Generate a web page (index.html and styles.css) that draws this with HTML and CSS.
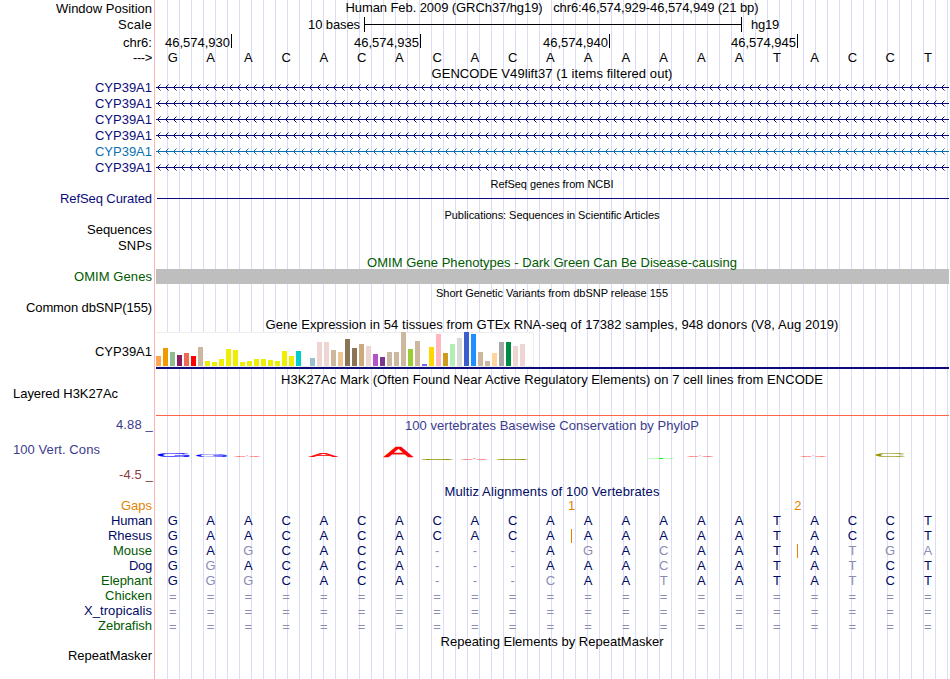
FILE: index.html
```
<!DOCTYPE html>
<html lang="en">
<head>
<meta charset="utf-8">
<title>Genome Browser</title>
<link rel="stylesheet" href="styles.css">
</head>
<body>
<main class="browser">
  <div class="row h17"><div class="label" data-w="96">Window Position</div><div class="title up" data-w="413">Human Feb. 2009 (GRCh37/hg19) &nbsp; chr6:46,574,929-46,574,949 (21 bp)</div></div>
  <div class="row h17"><div class="label up" data-w="34">Scale</div><div class="scale"><span class="up" data-w="52">10 bases</span><i class="ruler"></i><span class="up" data-w="28">hg19</span></div></div>
  <div class="row h16"><div class="label low" data-w="29">chr6:</div><div class="ticks"><span data-w="65">46,574,930</span><span data-w="65">46,574,935</span><span data-w="65">46,574,940</span><span data-w="65">46,574,945</span></div></div>
  <div class="row h15"><div class="label" data-w="19">---&gt;</div><div class="bases black" data-seq="GAACACACACAAAAAATACCT"></div></div>
  <div class="row h15"><div></div><div class="title lower" data-w="241">GENCODE V49lift37 (1 items filtered out)</div></div>
  <div class="row h16 navy"><div class="label" data-w="57">CYP39A1</div><div class="gene"></div></div>
  <div class="row h16 navy"><div class="label" data-w="57">CYP39A1</div><div class="gene"></div></div>
  <div class="row h16 navy"><div class="label" data-w="57">CYP39A1</div><div class="gene"></div></div>
  <div class="row h16 navy"><div class="label" data-w="57">CYP39A1</div><div class="gene"></div></div>
  <div class="row h16 azure"><div class="label" data-w="57">CYP39A1</div><div class="gene"></div></div>
  <div class="row h16 navy"><div class="label" data-w="57">CYP39A1</div><div class="gene"></div></div>
  <div class="row h15"><div></div><div class="title small" data-w="123">RefSeq genes from NCBI</div></div>
  <div class="row h16 navy"><div class="label" data-w="92">RefSeq Curated</div><div class="refseq"></div></div>
  <div class="row h15"><div></div><div class="title small" data-w="215">Publications: Sequences in Scientific Articles</div></div>
  <div class="row h16"><div class="label" data-w="65">Sequences</div></div>
  <div class="row h16"><div class="label" data-w="34">SNPs</div></div>
  <div class="row h15 green"><div></div><div class="title lower" data-w="370">OMIM Gene Phenotypes - Dark Green Can Be Disease-causing</div></div>
  <div class="row h16"><div class="label green" data-w="78">OMIM Genes</div><div class="omim"></div></div>
  <div class="row h15"><div></div><div class="title small" data-w="232">Short Genetic Variants from dbSNP release 155</div></div>
  <div class="row h16"><div class="label" data-w="126">Common dbSNP(155)</div></div>
  <div class="row h16"><div></div><div class="title low" data-w="573">Gene Expression in 54 tissues from GTEx RNA-seq of 17382 samples, 948 donors (V8, Aug 2019)</div></div>
  <div class="row h39"><div class="label" data-w="57">CYP39A1</div><div class="gtex"><div class="bars"></div></div></div>
  <div class="row h17"><div></div><div class="title" data-w="542">H3K27Ac Mark (Often Found Near Active Regulatory Elements) on 7 cell lines from ENCODE</div></div>
  <div class="row h28"><div class="label left top" data-w="105">Layered H3K27Ac</div><div class="h3k"></div></div>
  <div class="row h18 slate"><div class="label axis" data-w="37">4.88 _</div><div class="title low" data-w="294">100 vertebrates Basewise Conservation by PhyloP</div></div>
  <div class="row h50">
    <div class="cons"><div class="label left slate" data-w="87">100 Vert. Cons</div><div class="label axis maroon" data-w="34">-4.5 _</div></div>
    <svg class="logo" viewBox="155 434 794 50" width="794" height="50"></svg>
  </div>
  <div class="row h15 ink"><div></div><div class="title" data-w="215">Multiz Alignments of 100 Vertebrates</div></div>
  <div class="row h14 orange"><div class="label up" data-w="31">Gaps</div><div class="gaps up"><span>1</span><span>2</span></div></div>
  <div class="row h15"><div class="label ink" data-w="41">Human</div><div class="bases" data-seq="GAACACACACAAAAAATACCT"></div></div>
  <div class="row h15"><div class="label ink" data-w="44">Rhesus</div><div class="bases" data-seq="GAACACACACA|AAAAATACCT"></div></div>
  <div class="row h15"><div class="label green" data-w="39">Mouse</div><div class="bases" data-seq="GAgCACA---AgAcAAT|Atga"></div></div>
  <div class="row h15"><div class="label ink" data-w="23">Dog</div><div class="bases" data-seq="GgACACA---AAAcAATAtCT"></div></div>
  <div class="row h15"><div class="label green" data-w="51">Elephant</div><div class="bases" data-seq="GggCACA---cAAtAATAtCT"></div></div>
  <div class="row h15"><div class="label green" data-w="47">Chicken</div><div class="bases unaligned" data-seq="====================="></div></div>
  <div class="row h15"><div class="label ink" data-w="68">X_tropicalis</div><div class="bases unaligned" data-seq="====================="></div></div>
  <div class="row h15"><div class="label green" data-w="54">Zebrafish</div><div class="bases unaligned" data-seq="====================="></div></div>
  <div class="row h16"><div></div><div class="title low" data-w="223">Repeating Elements by RepeatMasker</div></div>
  <div class="row h15"><div class="label up" data-w="84">RepeatMasker</div></div>
</main>
<script src="script.js"></script>
</body>
</html>
```
FILE: styles.css
```
* { box-sizing: border-box; }
body { margin: 0; background: #fff; overflow: hidden; }
.browser {
  width: 950px;
  height: 679px;
  font: 13px/16px "Liberation Sans", Arial, sans-serif;
  color: #000;
  white-space: nowrap;
  background:
    linear-gradient(#ffb4b4, #ffb4b4) 154px 0 / 1px 100% no-repeat,
    linear-gradient(#fff, #fff) 0 0 / 156px 100% no-repeat,
    linear-gradient(90deg, #dcdcf8 1px, transparent 1px) 11px 0 / 12px 100% repeat;
}
.row { display: grid; grid-template: 100% / 155px 794px; align-items: center; }
.row > * { min-width: 0; }
.h14 { height: 14px; }
.h15 { height: 15px; }
.h16 { height: 16px; }
.h17 { height: 17px; }
.h18 { height: 18px; }
.h28 { height: 28px; }
.h39 { height: 39px; }
.h50 { height: 50px; }
.label { justify-self: end; margin-right: 3px; }
.label.left { justify-self: start; margin-left: 13px; }
.label.top { align-self: start; margin-top: -2px; }
.label.axis { margin-right: 2px; }
.title { justify-self: center; position: relative; z-index: 1; }
.low { padding-top: 1px; }
.lower { padding-top: 2px; }
.up { padding-bottom: 1px; }
.small { font-size: 11px; }
.navy { color: #0c0c78; }
.azure { color: #0c70b0; }
.green { color: #005a00; }
.slate { color: #3c3c8c; }
.maroon { color: #8c3c3c; }
.ink { color: #000a64; }
.orange { color: #e68200; }

.scale { display: flex; align-items: center; height: 17px; padding-left: 153px; }
.ruler {
  align-self: flex-start;
  width: 378px;
  height: 15px;
  margin: 0 9px 0 4px;
  border: solid #000;
  border-width: 0 1px;
  background: linear-gradient(#000, #000) 0 7px / 100% 1px no-repeat;
}
.ticks { display: flex; gap: 122px; padding-left: 10px; align-self: start; }
.ticks span { width: 67px; height: 14px; line-height: 17px; border-right: 1px solid #000; }
.ticks span:last-child { margin-left: -1px; }
.bases { display: grid; grid-template-columns: repeat(21, 37.76px); margin-left: -1px; text-align: center; position: relative; }
.bases.unaligned { padding-top: 2px; }
.bases span { color: #000a64; }
.bases.black span { color: #000; }
.bases .dim { color: #8c8cb4; }
.insert { position: absolute; top: 1px; width: 1px; height: 14px; background: #e68200; }
.gene, .refseq, .omim, .gtex, .h3k { align-self: start; margin-left: 1px; }
.gene svg { display: block; }
.refseq { height: 8px; margin-left: 2px; border-bottom: 1px solid #0c0c78; }
.omim { height: 15px; background: #bebebe; }
.gtex { border-bottom: 2px solid #0c0c78; height: 37px; }
.bars {
  display: flex;
  align-items: flex-end;
  gap: 2px;
  width: 378px;
  height: 35px;
  background: #fff;
  border: solid #eee;
  border-width: 1px 1px 1px 0;
}
.bars i { flex: none; width: 5px; }
.h3k { height: 28px; border-bottom: 1px solid #ff6446; }
.cons { display: flex; flex-direction: column; height: 50px; padding-top: 8px; gap: 9px; }
.cons .left { align-self: flex-start; }
.cons .axis { align-self: flex-end; }
.logo { display: block; font-size: 100px; }
.gaps { display: flex; gap: 219px; padding-left: 413px; }
```
FILE: script.js
```
const NS = "http://www.w3.org/2000/svg";

// Sequence rows: lower case marks a mismatch, "|" an insertion before the next base.
document.querySelectorAll(".bases").forEach(row => {
  let column = 0;
  for (const c of row.dataset.seq) {
    if (c === "|") {
      const bar = document.createElement("i");
      bar.className = "insert";
      bar.style.left = Math.floor(column * 37.76 + 1.7) + "px";
      row.append(bar);
      continue;
    }
    const cell = document.createElement("span");
    cell.textContent = c.toUpperCase();
    if (/[a-z=-]/.test(c)) cell.className = "dim";
    row.append(cell);
    column++;
  }
});

// Intron lines with strand arrows every 8px.
document.querySelectorAll(".gene").forEach(gene => {
  let arrows = "";
  for (let x = 1; x < 790; x += 8) arrows += `M${x + 3.5} 4.5L${x + 0.5} 7.5L${x + 3.5} 10.5`;
  gene.innerHTML = `<svg width="793" height="16"><path d="M0 7.5H793" stroke="currentColor"/><path d="${arrows}" fill="none" stroke="currentColor"/></svg>`;
});

// Median expression per tissue: bar height and tissue colour.
const tan = "#cdb79e", brain = "#eeee00", rose = "#eed5d2";
const tissues = [
  [10, "#ffa54f"], [18, "#ee9a00"], [14, "#8fbc8f"], [11, "#8b1c62"], [13, "#ee6a50"], [10, "#ff0000"], [19, tan],
  [5, brain], [4, brain], [7, brain], [17, brain], [16, brain], [4, brain], [5, brain], [7, brain], [7, brain],
  [6, brain], [5, brain], [15, brain], [10, brain], [15, "#00cdcd"], [0, "#ee82ee"], [8, "#9ac0cd"],
  [24, rose], [24, rose], [16, tan], [14, "#eec591"], [27, "#8b7355"], [18, "#8b7355"], [22, "#cdaa7d"],
  [20, rose], [12, "#b452cd"], [9, "#7a378b"], [14, tan], [14, tan], [34, tan], [17, "#9acd32"], [25, tan],
  [2, "#7a67ee"], [19, "#ffd700"], [32, "#ffb6c1"], [13, "#cd9b1d"], [22, "#b4eeb4"], [28, "#d9d9d9"],
  [34, "#3a5fcd"], [32, "#1e90ff"], [14, tan], [5, tan], [13, "#ffd39b"], [24, "#a6a6a6"], [24, "#008b45"],
  [20, rose], [22, rose], [0, "#ff00ff"]
];
const bars = document.querySelector(".bars");
for (const [height, color] of tissues) {
  const bar = document.createElement("i");
  bar.style.height = height + "px";
  bar.style.background = color;
  bars.append(bar);
}

// Conservation logo: base, left, right, top, bottom, colour, outline weight.
const logo = [
  ["G", 158, 189, 453, 457, "#0000ff", 2], ["G", 196, 227, 455.2, 457, "#0000ff", 0], ["A", 234, 261, 456, 457, "#ff0000", 3],
  ["A", 309, 338, 453, 457, "#ff0000", 3], ["A", 384, 413, 447, 457, "#ff0000", 3], ["C", 423, 452, 458.2, 459.8, "#969600", 8],
  ["A", 461, 488, 458.2, 459.8, "#ff0000", 3], ["C", 498, 527, 458.2, 459.8, "#969600", 8], ["T", 648, 674, 458.2, 459, "#00ff00", 0],
  ["A", 687, 714, 456, 457, "#ff0000", 3], ["A", 800, 827, 456, 457, "#ff0000", 3], ["C", 876, 905, 453, 457, "#969600", 2]
];
const svg = document.querySelector(".logo");
const ink = { G: [5, 66], A: [0, 67], C: [5, 64], T: [2, 57] };
for (const [base, left, right, top, bottom, color, weight] of logo) {
  const [start, width] = ink[base];
  const sx = (right - left) / width, sy = (bottom - top) / 70;
  const text = document.createElementNS(NS, "text");
  text.textContent = base;
  text.setAttribute("fill", color);
  if (weight) {
    text.setAttribute("stroke", color);
    text.setAttribute("stroke-width", weight);
  }
  text.setAttribute("transform", `translate(${left - start * sx} ${bottom}) scale(${sx} ${sy})`);
  svg.append(text);
}

// Track text to its nominal width.
document.querySelectorAll("[data-w]").forEach(el => {
  const range = document.createRange();
  range.selectNodeContents(el);
  const natural = range.getBoundingClientRect().width;
  el.style.letterSpacing = (el.dataset.w - natural) / el.textContent.length + "px";
});
```
